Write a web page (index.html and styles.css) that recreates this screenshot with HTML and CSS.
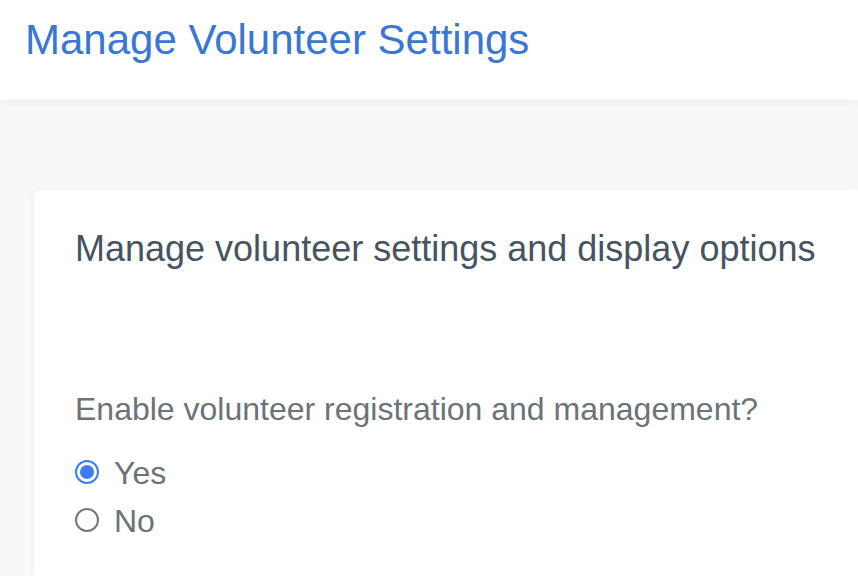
FILE: index.html
```html
<!DOCTYPE html>
<html>
<head>
<meta charset="utf-8">
<link rel="stylesheet" href="styles.css">
</head>
<body>
<header class="topbar">
  <h1 class="page-title">Manage Volunteer Settings</h1>
</header>
<main class="content">
  <section class="card">
    <h2 class="card-title">Manage volunteer settings and display options</h2>
    <div class="field" role="radiogroup">
      <div class="question">Enable volunteer registration and management?</div>
      <label class="option"><span class="radio checked"></span><span>Yes</span></label>
      <label class="option"><span class="radio"></span><span>No</span></label>
    </div>
  </section>
</main>
</body>
</html>
```
FILE: styles.css
```css
html, body {
  margin: 0;
  padding: 0;
  height: 100%;
  overflow: hidden;
}
body {
  background: #f8f8f8;
  font-family: "Liberation Sans", Arial, sans-serif;
  display: flex;
  flex-direction: column;
}
.topbar {
  height: 100px;
  flex: none;
  background: #fff;
  box-shadow: 0 2px 8px rgba(0, 0, 0, 0.05);
  padding-left: 25px;
  position: relative;
  z-index: 1;
}
.page-title {
  margin: 0;
  padding-top: 17px;
  font-size: 42px;
  font-weight: normal;
  line-height: 46px;
  color: #3a77d2;
}
.content {
  flex: 1;
  display: flex;
  flex-direction: column;
  padding: 90px 0 0 34px;
  min-height: 0;
}
.card {
  flex: 1;
  background: #fff;
  border-radius: 8px 0 0 0;
  padding: 39px 0 0 41px;
  box-shadow: 0 0 10px rgba(0, 0, 0, 0.03);
}
.card-title {
  margin: 0;
  font-size: 36px;
  line-height: 40px;
  font-weight: normal;
  color: #46545f;
  white-space: nowrap;
}
.field {
  display: flex;
  flex-direction: column;
  padding-top: 122px;
}
.question {
  font-size: 32px;
  line-height: 36px;
  color: #6b7378;
  margin-bottom: 22px;
  white-space: nowrap;
}
.option {
  display: flex;
  align-items: center;
  gap: 15px;
  font-size: 32px;
  line-height: 48px;
  color: #6b7378;
}
.radio {
  width: 24px;
  height: 24px;
  margin-top: -2px;
  box-sizing: border-box;
  border: 2px solid #767676;
  border-radius: 50%;
  display: flex;
  align-items: center;
  justify-content: center;
}
.radio.checked {
  border-color: #3b7cf0;
}
.radio.checked::after {
  content: "";
  width: 14px;
  height: 14px;
  border-radius: 50%;
  background: #3b7cf0;
}
```
